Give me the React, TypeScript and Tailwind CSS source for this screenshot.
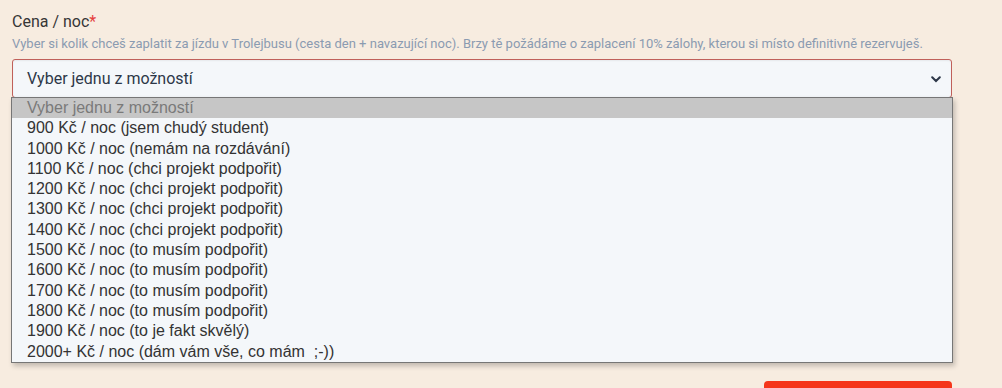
import React from 'react';

const options = [
  '900 Kč / noc (jsem chudý student)',
  '1000 Kč / noc (nemám na rozdávání)',
  '1100 Kč / noc (chci projekt podpořit)',
  '1200 Kč / noc (chci projekt podpořit)',
  '1300 Kč / noc (chci projekt podpořit)',
  '1400 Kč / noc (chci projekt podpořit)',
  '1500 Kč / noc (to musím podpořit)',
  '1600 Kč / noc (to musím podpořit)',
  '1700 Kč / noc (to musím podpořit)',
  '1800 Kč / noc (to musím podpořit)',
  '1900 Kč / noc (to je fakt skvělý)',
  '2000+ Kč / noc (dám vám vše, co mám  ;-))',
];

export default function App() {
  return (
    <div className="h-[388px] w-[1002px] overflow-hidden bg-[#f7ece0] font-['Roboto',sans-serif]">
      <div className="relative pl-3 pt-[11px] w-[952px]">
        {/* Label */}
        <div className="text-[16px] leading-[22px] text-[#363636]">
          Cena / noc<span className="text-[#e53e3e]">*</span>
        </div>
        <p className="mt-[3px] text-[13px] leading-[16px] text-[#8b9bb1] whitespace-nowrap">
          Vyber si kolik chceš zaplatit za jízdu v Trolejbusu (cesta den + navazující noc). Brzy tě požádáme o zaplacení 10% zálohy, kterou si místo definitivně rezervuješ.
        </p>

        {/* Select */}
        <div className="mt-[7px] h-[39px] flex items-center justify-between rounded-[3px] border border-[#c0605a] bg-[#f4f7fa] pl-[14px] pr-[10px] shadow-[inset_0_1px_2px_rgba(0,0,0,0.06)]">
          <span className="text-[16px] text-[#2d3748]">Vyber jednu z možností</span>
          <svg width="10" height="7" viewBox="0 0 10 7" className="mt-[1px]">
            <path d="M1.2 1.2 L5 5 L8.8 1.2" fill="none" stroke="#2d3748" strokeWidth="2" strokeLinecap="round" />
          </svg>
        </div>

        {/* Native dropdown popup */}
        <div className="absolute left-[11px] top-[97px] w-[942px] border border-[#767676] bg-[#f4f7fa] shadow-[2px_3px_5px_rgba(0,0,0,0.22)] font-['Liberation_Sans',Arial,sans-serif] text-[16px] leading-[20.3px]">
          <div className="bg-[#c6c6c6] pl-[15px] text-[#7a7a7a]">Vyber jednu z možností</div>
          {options.map((o) => (
            <div key={o} className="pl-[15px] text-[#333] whitespace-pre">
              {o}
            </div>
          ))}
        </div>

        {/* Submit button peeking */}
        <div className="flex justify-end mt-[283px]">
          <div className="h-[20px] w-[188px] rounded-[4px] bg-[#f5361b]" />
        </div>
      </div>
    </div>
  );
}
